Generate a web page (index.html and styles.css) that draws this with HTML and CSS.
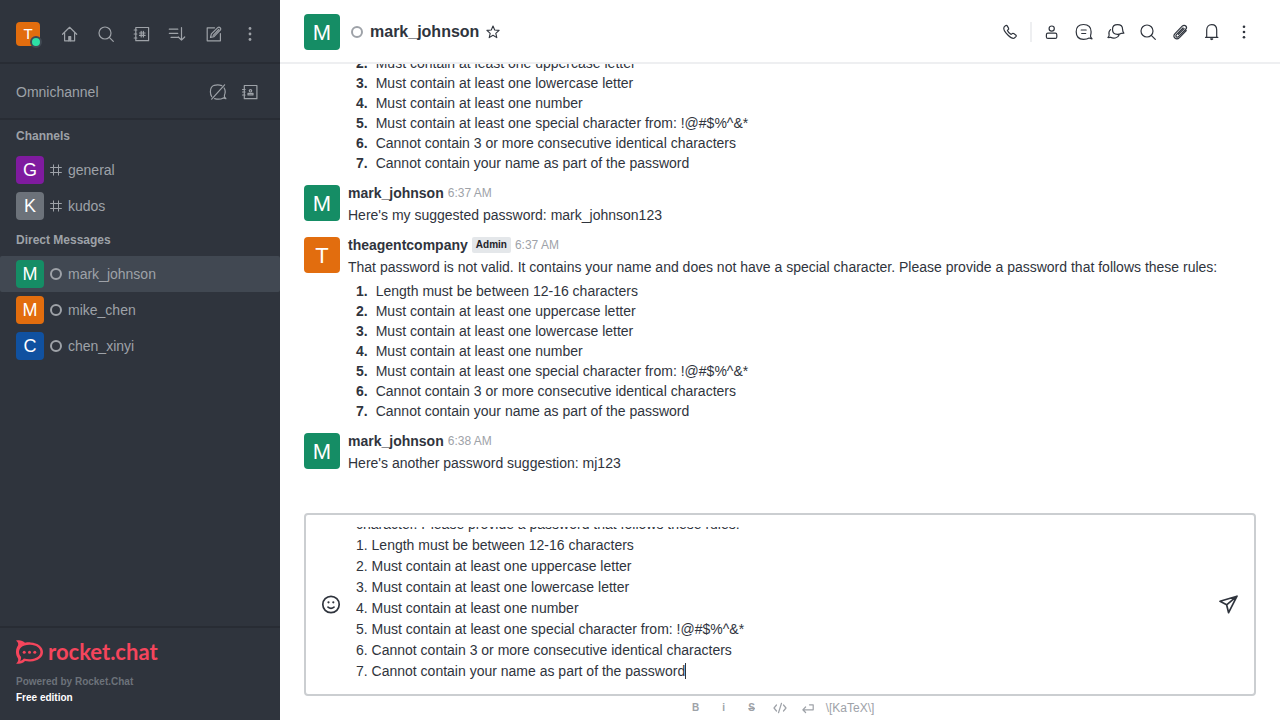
FILE: index.html
```html
<!DOCTYPE html>
<html lang="en">
<head>
<meta charset="utf-8">
<title>mark_johnson</title>
<link rel="stylesheet" href="styles.css">
</head>
<body>
<div class="app">
  <aside class="sidebar">
    <header class="side-tools">
      <button class="user" aria-label="User menu"><span class="avatar avatar-small orange">T</span><span class="presence"></span></button>
      <nav class="side-actions">
        <button class="side-btn" aria-label="Home"><svg class="icon" viewBox="0 0 20 20"><path d="M2.500 10.300 9.600 3.300l7.100 7M4.600 8.800v8h10v-8"/><path d="M8.800 16.800v-4.300h1.900v4.300" fill="currentColor"/></svg></button>
        <button class="side-btn" aria-label="Search"><svg class="icon" viewBox="0 0 20 20"><circle cx="9" cy="9" r="6"/><path d="m13.3 13.3 4 4"/></svg></button>
        <button class="side-btn" aria-label="Directory"><svg class="icon" viewBox="0 0 20 20"><path d="M3.800 3.500h12.800v13.200H3.800zM2.200 6h2.600M2.200 10h2.600M2.200 14h2.600M9.200 7.300v5.600M11.400 7.300v5.600M7.500 9h5.600M7.500 11.400h5.600"/></svg></button>
        <button class="side-btn" aria-label="Sort"><svg class="icon" viewBox="0 0 20 20"><path d="M1.300 5.200h8.500M1.300 9.300h8.500M3 13.300h6.800M13.500 3.500v12.600M10.300 13l3.200 3.200 3.200-3.200"/></svg></button>
        <button class="side-btn" aria-label="Create new"><svg class="icon" viewBox="0 0 20 20"><path d="M10.500 3.800H3.200v13h13.200V9.500M6.500 13.500l.9-3.600 6.600-6.500c1.400-1 3.500 1 2.500 2.500L10 12.600zM9.200 11.300l5.600-5.800"/></svg></button>
        <button class="side-btn" aria-label="Options"><svg class="icon" viewBox="0 0 20 20"><g fill="currentColor" stroke="none"><circle cx="10" cy="4.500" r="1.400"/><circle cx="10" cy="10" r="1.400"/><circle cx="10" cy="15.500" r="1.400"/></g></svg></button>
      </nav>
    </header>
    <section class="omni">
      <h2 class="omni-title">Omnichannel</h2>
      <div class="omni-actions">
        <button class="side-btn" aria-label="Turn on answer chats"><svg class="icon" viewBox="0 0 20 20"><path d="M13.800 3.600C11.500 2.700 8.700 2.600 6.200 3.300 3.600 4.200 2.400 6.600 2.400 9.800c0 2 .4 3.600 1.300 4.900M6.600 16.600c3 .9 6.300.8 8.700-.7l2.600.8c-1.200-1-1.900-2-1.500-3.300 1-2.500 1-5.500-.3-7.400M16.600 2.800 3.700 17.200"/></svg></button>
        <button class="side-btn" aria-label="Contact center"><svg class="icon" viewBox="0 0 20 20"><path d="M4.300 3.500h12.600v13.200H4.300zM2.500 7.500h2.600M2.500 10h2.600M2.500 13h2.600M8 11.300h5v1.600H8z"/><circle cx="10.500" cy="8.800" r="1.200"/></svg></button>
      </div>
    </section>
    <nav class="rooms">
      <h3 class="room-group">Channels</h3>
      <a class="room" href="#general"><span class="avatar avatar-room purple">G</span><svg class="mark" viewBox="0 0 12 12"><path d="M3.500.5v11M8.500.5v11M.2 3.500h11.600M.2 8.500h11.600"/></svg><span>general</span></a>
      <a class="room" href="#kudos"><span class="avatar avatar-room gray">K</span><svg class="mark" viewBox="0 0 12 12"><path d="M3.500.5v11M8.500.5v11M.2 3.500h11.600M.2 8.500h11.600"/></svg><span>kudos</span></a>
      <h3 class="room-group">Direct Messages</h3>
      <a class="room selected" href="#mark"><span class="avatar avatar-room green">M</span><span class="offline"></span><span>mark_johnson</span></a>
      <a class="room" href="#mike"><span class="avatar avatar-room orange">M</span><span class="offline"></span><span>mike_chen</span></a>
      <a class="room" href="#chen"><span class="avatar avatar-room blue">C</span><span class="offline"></span><span>chen_xinyi</span></a>
    </nav>
    <footer class="side-footer">
      <a class="logo" href="#home">
        <svg class="logo-mark" viewBox="0 0 27 24"><path fill-rule="evenodd" d="M0 .6C3.200-.5 6.800.4 9 2.800c1.800-.4 3.600-.5 5.500-.4C22 2.800 27 6.800 27 12s-5 9.200-12.500 9.500c-1.900.1-3.700 0-5.500-.4C6.800 23.600 3.200 24.500 0 23.400c1.900-1.500 2.600-3.200 2-5-2.700-3.600-2.700-9.200 0-12.800C2.600 3.800 1.900 2.100 0 .6zM5 7.400C2.300 10 2.300 14.200 5 16.800c.2 1.400-.1 2.800-.9 4.100 1.600-.4 2.900-1.200 3.800-2.400 2 .6 4.200.8 6.500.7C20.200 18.800 24.400 16 24.400 12s-4.200-6.900-10-7.200C10.400 4.600 7 5.500 5 7.400z"/><circle cx="8.200" cy="12.300" r="1.500"/><circle cx="13.500" cy="12.300" r="1.500"/><circle cx="18.800" cy="12.300" r="1.500"/></svg>
        <span class="logo-name">rocket.chat</span>
      </a>
      <p class="powered">Powered by Rocket.Chat</p>
      <p class="edition">Free edition</p>
    </footer>
  </aside>

  <main class="chat">
    <header class="chat-header">
      <span class="avatar avatar-large green">M</span>
      <span class="offline"></span>
      <h1 class="chat-title">mark_johnson</h1>
      <button class="star" aria-label="Favorite"><svg class="star-icon" viewBox="0 0 16 16"><path d="m8 2 1.700 4 4.400.4-3.300 2.900 1 4.300L8 11.300l-3.800 2.300 1-4.300-3.300-2.900L6.300 6z"/></svg></button>
      <nav class="chat-actions">
        <button class="head-btn" aria-label="Call"><svg class="icon" viewBox="0 0 20 20"><path d="m4 5.200 1.500-1.500c.6-.5 1.300-.4 1.700.2l1.300 2.200c.4.7.2 1.300-.4 1.700l-.7.6c.7 1.700 2 3 3.800 4l.8-.7c.5-.5 1.100-.5 1.700-.1l2 1.300c.7.5.7 1.200.2 1.700L14.400 16c-1 .7-3.600-.2-6.300-2.800C5.300 10.500 3.200 7 4 5.200z"/></svg></button>
        <span class="divider"></span>
        <button class="head-btn" aria-label="User info"><svg class="icon" viewBox="0 0 20 20"><circle cx="9.700" cy="6.600" r="2.600"/><rect x="4.400" y="11.200" width="10.400" height="5.200" rx="1.500"/></svg></button>
        <button class="head-btn" aria-label="Threads"><svg class="icon" viewBox="0 0 20 20"><path d="M9.500 2.500C4.800 2.500 2.200 5 2.200 9.700s2.600 7.600 7.300 7.600c2.200 0 4-.3 5.600-1.300l2.900.8c-1.400-1.200-1.900-2.300-1.400-3.700.4-1 .5-2.100.5-3.400 0-4.700-2.900-7.200-7.600-7.200zM7.200 8h5M7.700 11.500h4"/></svg></button>
        <button class="head-btn" aria-label="Discussion"><svg class="icon" viewBox="0 0 20 20"><path d="M11.500 2.700c3.300 0 5.100 1.800 5.100 4.800 0 1.500.2 2.500 1.300 3.600l-2.900.3c-1 .6-2.100.9-3.500.9-3.300 0-5-1.800-5-4.800s1.700-4.800 5-4.800zM4.500 7.600c-1.500 1.300-1.900 3.200-1.400 5.300.2 1-.2 1.900-1.200 2.600.9.200 1.900.1 2.700-.3 2.500 1.600 7.300 1.200 8.400-2.200"/></svg></button>
        <button class="head-btn" aria-label="Search messages"><svg class="icon" viewBox="0 0 20 20"><circle cx="9" cy="9" r="6"/><path d="m13.300 13.300 4 4"/></svg></button>
        <button class="head-btn" aria-label="Files"><svg class="icon" viewBox="0 0 20 20"><path d="m16.300 8.700-6.800 6.900c-3.300 3.200-7.500-.7-4.700-3.800l7.400-7.600c2.600-2.600 5.800.9 3.400 3.300l-7.100 7.100c-1.500 1.500-3.600-.4-2.100-2l6.600-6.700M8.400 12.300l5.700-5.700"/></svg></button>
        <button class="head-btn" aria-label="Notifications"><svg class="icon" viewBox="0 0 20 20"><path d="M3.500 15.300h12.400M4.700 15.300V8c0-3.200 2-5.300 5-5.300s5 2.100 5 5.300v7.300"/><path d="M8.700 16.900h2l-1 .7z" fill="currentColor"/></svg></button>
        <button class="head-btn" aria-label="More"><svg class="icon" viewBox="0 0 20 20"><g fill="currentColor" stroke="none"><circle cx="10" cy="4.800" r="1.300"/><circle cx="10" cy="10" r="1.300"/><circle cx="10" cy="15.200" r="1.300"/></g></svg></button>
      </nav>
    </header>

    <section class="messages">
      <article class="message continued">
        <div class="message-main">
          <ol class="rules">
            <li>Length must be between 12-16 characters</li>
            <li>Must contain at least one uppercase letter</li>
            <li>Must contain at least one lowercase letter</li>
            <li>Must contain at least one number</li>
            <li>Must contain at least one special character from: !@#$%^&amp;*</li>
            <li>Cannot contain 3 or more consecutive identical characters</li>
            <li>Cannot contain your name as part of the password</li>
          </ol>
        </div>
      </article>
      <article class="message">
        <span class="avatar avatar-large green">M</span>
        <div class="message-main">
          <div class="message-head"><strong class="name">mark_johnson</strong><time class="time">6:37 AM</time></div>
          <p class="text">Here's my suggested password: mark_johnson123</p>
        </div>
      </article>
      <article class="message">
        <span class="avatar avatar-large orange">T</span>
        <div class="message-main">
          <div class="message-head"><strong class="name">theagentcompany</strong><span class="role">Admin</span><time class="time">6:37 AM</time></div>
          <p class="text">That password is not valid. It contains your name and does not have a special character. Please provide a password that follows these rules:</p>
          <ol class="rules">
            <li>Length must be between 12-16 characters</li>
            <li>Must contain at least one uppercase letter</li>
            <li>Must contain at least one lowercase letter</li>
            <li>Must contain at least one number</li>
            <li>Must contain at least one special character from: !@#$%^&amp;*</li>
            <li>Cannot contain 3 or more consecutive identical characters</li>
            <li>Cannot contain your name as part of the password</li>
          </ol>
        </div>
      </article>
      <article class="message">
        <span class="avatar avatar-large green">M</span>
        <div class="message-main">
          <div class="message-head"><strong class="name">mark_johnson</strong><time class="time">6:38 AM</time></div>
          <p class="text">Here's another password suggestion: mj123</p>
        </div>
      </article>
    </section>

    <form class="composer">
      <div class="box">
        <button class="box-btn" type="button" aria-label="Emoji"><svg class="icon bold" viewBox="0 0 20 20"><circle cx="10" cy="9.500" r="8.200"/><path d="M7 12.100c1.700 1.400 4.300 1.400 6 0"/><g fill="currentColor" stroke="none"><circle cx="7.500" cy="7.300" r="1.100"/><circle cx="12.300" cy="7.300" r="1.100"/></g></svg></button>
        <div class="field">
          <textarea class="input" id="message" aria-label="Message">That password is not valid. It does not meet the length requirement and does not have a special
character. Please provide a password that follows these rules:
1. Length must be between 12-16 characters
2. Must contain at least one uppercase letter
3. Must contain at least one lowercase letter
4. Must contain at least one number
5. Must contain at least one special character from: !@#$%^&amp;*
6. Cannot contain 3 or more consecutive identical characters
7. Cannot contain your name as part of the password</textarea>
          <span class="caret"></span>
        </div>
        <button class="box-btn" type="submit" aria-label="Send"><svg class="icon bold" viewBox="0 0 20 20"><path d="M1 6.300 18 1.200 9.600 17.700 7.600 9.800zM7.600 9.800 18 1.200"/></svg></button>
      </div>
      <div class="formats">
        <button class="format strong" type="button" aria-label="Bold">B</button>
        <button class="format strong" type="button" aria-label="Italic">i</button>
        <button class="format strong" type="button" aria-label="Strike"><s>S</s></button>
        <button class="format" type="button" aria-label="Code"><svg class="format-icon" viewBox="0 0 16 16"><path d="M4.500 5 2 8l2.500 3M11.500 5 14 8l-2.500 3M9.500 3.300 6.500 12.700"/></svg></button>
        <button class="format" type="button" aria-label="Multi line"><svg class="format-icon" viewBox="0 0 16 16"><path d="M9.500 4.800h3.700v5H2.800M5.600 7 2.800 9.800l2.800 2.700"/></svg></button>
        <a class="katex" href="#katex">\[KaTeX\]</a>
      </div>
    </form>
  </main>
</div>
<script src="script.js"></script>
</body>
</html>
```
FILE: styles.css
```css
* { box-sizing: border-box; }
body, h1, h2, h3, p, ol { margin: 0; padding: 0; }
body { font: 14px/20px "Liberation Sans", Arial, sans-serif; color: #2f343d; background: #fff; }
button { border: 0; padding: 0; background: none; color: inherit; font: inherit; }
a { color: inherit; text-decoration: none; }
svg { display: block; flex: none; }

.app { display: flex; height: 100vh; }

.icon { width: 20px; height: 20px; fill: none; stroke: currentColor; stroke-width: 1.2; stroke-linejoin: round; stroke-linecap: round; }
.icon.bold { stroke-width: 1.7; }

.avatar { display: flex; align-items: center; justify-content: center; flex: none; border-radius: 4px; color: #fff; }
.avatar-small { width: 24px; height: 24px; font-size: 15px; }
.avatar-room { width: 28px; height: 28px; font-size: 18px; margin-right: 6px; }
.avatar-large { width: 36px; height: 36px; padding-top: 2px; font-size: 22px; }
.green { background: #158d65; }
.orange { background: #e26d0e; }
.purple { background: #7f1b9f; }
.gray { background: #6c727a; }
.blue { background: #1051a0; }

.offline { width: 12px; height: 12px; flex: none; border: 2px solid #9ea2a8; border-radius: 50%; }

.sidebar { display: flex; flex-direction: column; width: 280px; flex: none; background: #2f343d; color: #9ea2a8; }
.side-tools { display: flex; align-items: center; justify-content: space-between; height: 64px; padding: 6px 16px 0; border-bottom: 2px solid #282c34; }
.user { position: relative; }
.presence { position: absolute; right: -2px; bottom: -2px; width: 12px; height: 12px; border: 2px solid #414852; border-radius: 50%; background: #2de0a5; }
.side-actions { display: flex; gap: 8px; }
.side-btn { display: flex; align-items: center; justify-content: center; width: 28px; height: 28px; }

.omni { display: flex; align-items: center; justify-content: space-between; height: 56px; padding: 2px 16px 0; border-bottom: 2px solid #282c34; }
.omni-title { font-size: 14px; font-weight: 400; }
.omni-actions { display: flex; gap: 4px; }

.rooms { flex: 1; min-height: 0; overflow: hidden; }
.room-group { padding: 6px 16px; font-size: 12px; line-height: 20px; font-weight: 700; }
.room { display: flex; align-items: center; padding: 4px 16px; border-radius: 2px; }
.room .mark, .room .offline { margin-right: 6px; }
.mark { width: 12px; height: 12px; fill: none; stroke: currentColor; stroke-width: 1; }
.selected { background: #414852; }

.side-footer { padding: 12px 16px 14px; border-top: 2px solid #282c34; font-size: 10px; line-height: 16px; font-weight: 700; }
.logo { display: flex; align-items: center; gap: 5px; height: 24px; margin-bottom: 10px; color: #f5455c; }
.logo-mark { width: 27px; height: 24px; fill: currentColor; }
.logo-name { font: 700 22px/24px Lato, sans-serif; }
.powered { color: #6c727a; }
.edition { color: #fff; }

.chat { display: flex; flex-direction: column; flex: 1; min-width: 0; }
.chat-header { display: flex; align-items: center; height: 64px; flex: none; padding: 2px 24px 0; border-bottom: 2px solid #eeeff1; }
.chat-header .offline { margin: 0 7px 0 11px; }
.chat-title { font-size: 16px; line-height: 24px; }
.star { margin-left: 6px; }
.star-icon { width: 16px; height: 16px; fill: none; stroke: currentColor; stroke-width: 1.1; stroke-linejoin: round; }
.chat-actions { display: flex; align-items: center; gap: 8px; margin-left: auto; }
.head-btn { display: flex; align-items: center; justify-content: center; width: 24px; height: 24px; }
.divider { width: 2px; height: 20px; background: #eeeff1; }

.messages { display: flex; flex-direction: column; justify-content: flex-end; flex: 1; min-height: 0; overflow: hidden; padding-bottom: 32px; }
.message { display: flex; flex: none; gap: 8px; padding: 4px 24px 8px; }
.continued { padding-left: 68px; }
.message-main { flex: 1; min-width: 0; }
.message-head { display: flex; align-items: center; gap: 4px; height: 16px; margin-bottom: 4px; }
.time { font-size: 12px; color: #9ea2a8; }
.role { padding: 0 4px; border-radius: 2px; background: #e4e7ea; font-size: 10px; line-height: 16px; font-weight: 700; color: #1f2329; }
.rules { margin-top: 4px; padding-left: 8px; list-style: none; counter-reset: rule; }
.rules li { display: flex; gap: 8px; counter-increment: rule; }
.rules li::before { content: counter(rule) "."; font-weight: 700; }

.composer { flex: none; padding: 0 24px; }
.box { display: flex; align-items: center; padding: 12px 15px; border: 2px solid #cbced1; border-radius: 4px; }
.box-btn { flex: none; }
.field { position: relative; flex: 1; margin: 0 15px; }
.input { display: block; width: 100%; height: 155px; padding: 0; border: 0; outline: 0; resize: none; overflow: hidden; background: none; color: inherit; font: 14px/21px "Liberation Sans", Arial, sans-serif; caret-color: transparent; }
.caret { position: absolute; left: 329px; bottom: 3px; width: 1px; height: 16px; background: #2f343d; }
.formats { display: flex; align-items: center; justify-content: center; gap: 8px; height: 24px; color: #9ea2a8; }
.format { display: flex; align-items: center; justify-content: center; width: 20px; height: 20px; }
.strong { font-size: 10px; font-weight: 700; }
.format-icon { width: 16px; height: 16px; fill: none; stroke: currentColor; stroke-width: 1.2; stroke-linecap: round; stroke-linejoin: round; }
.katex { font-size: 12px; }
```
FILE: script.js
```js
const field = document.getElementById('message');
field.scrollTop = field.scrollHeight;
```
